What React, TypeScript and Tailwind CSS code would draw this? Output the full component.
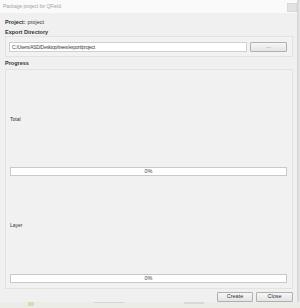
import React from "react";

const font = { fontFamily: '"Liberation Sans", Arial, sans-serif' };

function Bar() {
  return (
    <div className="h-[9px] bg-white border border-[#c9c9c9] flex items-center justify-center text-[5.5px] leading-none text-[#444]">
      0%
    </div>
  );
}

export default function App() {
  return (
    <div className="w-[300px] h-[308px] flex flex-col bg-[#e8e8e2] overflow-hidden" style={font}>
      <div className="flex h-[302px]">
        <div className="w-[297px] flex flex-col bg-[#f0f0f0]">
          {/* title bar */}
          <div className="h-[13px] bg-[#fafafa] flex items-center justify-between pl-[3px] pr-0">
            <span className="text-[5px] tracking-[-0.05px] text-[#a3a3a3] leading-none">Package project for QField</span>
            <div className="w-[10px] h-[9px] mt-[1px] bg-[#e2e2e2] border border-[#d9d9d9]" />
          </div>
          <div className="flex flex-col px-[5px] pr-[4px] text-[#333]">
            <div className="h-[9px] mt-[5px] flex items-center text-[5.5px] leading-none">
              <span className="font-bold">Project:</span>
              <span className="ml-[2px]">project</span>
            </div>
            <div className="h-[9px] mt-[1px] flex items-center text-[5.5px] leading-none font-bold">
              Export Directory
            </div>
            <div className="mt-[-1px] h-[21px] border border-[#e2e2e2] bg-[#f2f2f2] flex items-center pl-[3px] pr-[5px] gap-[3px] pt-[1px]">
              <div className="flex-1 h-[10px] bg-white border border-[#cfcfcf] flex items-center pl-[2px] text-[5px] tracking-[-0.3px] leading-none text-[#444]">
                C:/Users/ASD/Desktop/trees/export/project
              </div>
              <div className="w-[37px] h-[10px] border border-[#b0b0b0] rounded-[1px] bg-gradient-to-b from-[#f6f6f6] to-[#e4e4e4] flex items-center justify-center text-[5.5px] leading-none text-[#555]">
                ...
              </div>
            </div>
            <div className="h-[9px] mt-[2px] flex items-center text-[5.5px] leading-none font-bold">
              Progress
            </div>
            <div className="mt-[1px] h-[220px] border border-[#e2e2e2] bg-[#f1f1f1] flex flex-col pl-[4px] pr-[5px]">
              <div className="h-[9px] mt-[45px] flex items-center text-[5px] leading-none">Total</div>
              <div className="mt-[43px]">
                <Bar />
              </div>
              <div className="h-[9px] mt-[45px] flex items-center text-[5px] leading-none">Layer</div>
              <div className="mt-[44px]">
                <Bar />
              </div>
            </div>
            <div className="flex justify-end gap-[3px] mt-[3px]">
              <div className="w-[36px] h-[10px] border border-[#b0b0b0] rounded-[1px] bg-gradient-to-b from-[#f6f6f6] to-[#e4e4e4] flex items-center justify-center text-[5.5px] leading-none text-[#333]">
                Create
              </div>
              <div className="w-[37px] h-[10px] border border-[#b0b0b0] rounded-[1px] bg-gradient-to-b from-[#f6f6f6] to-[#e4e4e4] flex items-center justify-center text-[5.5px] leading-none text-[#333]">
                Close
              </div>
            </div>
          </div>
        </div>
        <div className="w-[3px] bg-gradient-to-r from-[#d4d4d4] to-[#e6e6e6]" />
      </div>
      <div className="h-[6px] bg-[#ecece6] flex items-start">
        <div className="ml-[28px] w-[6px] h-[4px] bg-[#cfe0b0]" />
        <div className="ml-[60px] w-[30px] h-[1px] bg-[#d6d6d0]" />
        <div className="ml-[60px] w-[20px] h-[2px] bg-[#d8d8d8]" />
      </div>
    </div>
  );
}
